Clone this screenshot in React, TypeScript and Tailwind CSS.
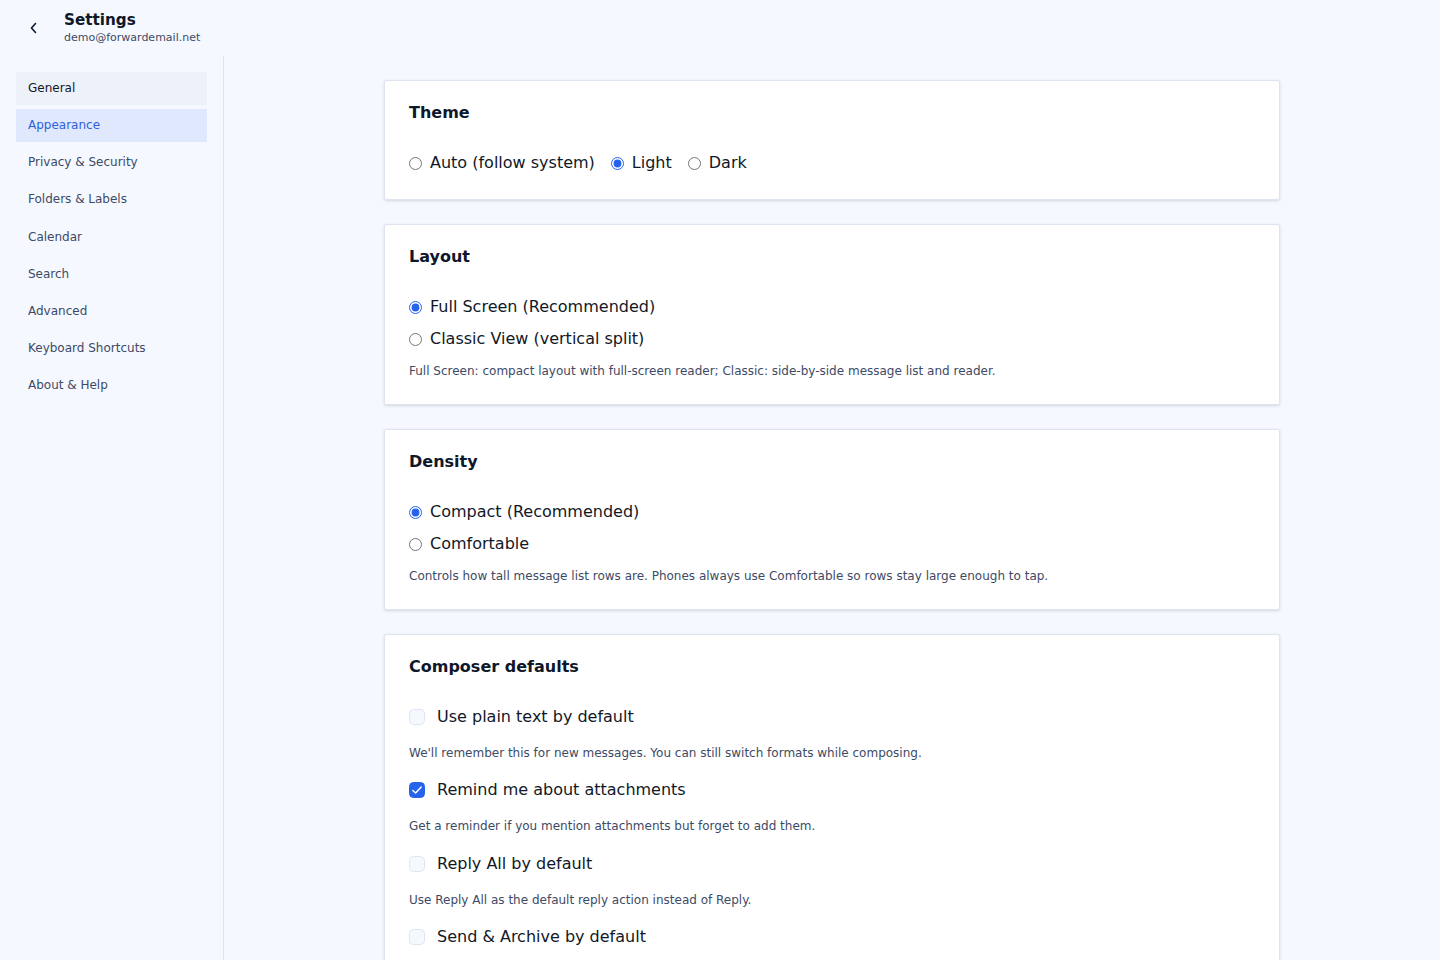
import React from "react";

const nav = ["General", "Appearance", "Privacy & Security", "Folders & Labels", "Calendar", "Search", "Advanced", "Keyboard Shortcuts", "About & Help"];

function Radio({ label, checked }: { label: string; checked?: boolean }) {
  return (
    <label className="flex items-center gap-[8px] h-[24px]">
      <input type="radio" readOnly checked={!!checked} className="m-0 w-[13px] h-[13px] accent-[#2563eb]" />
      <span className="text-[16px] leading-[24px] text-[#111827]">{label}</span>
    </label>
  );
}

function Check({ label, checked }: { label: string; checked?: boolean }) {
  return (
    <label className="flex items-center gap-[12px] h-[24px]">
      <span className={"w-[16px] h-[16px] rounded-[4.5px] border flex items-center justify-center " + (checked ? "bg-[#2563eb] border-[#2563eb]" : "bg-[#f5f8ff] border-[#dfe5f0]")}>
        {checked && (
          <svg width="14" height="14" viewBox="0 0 14 14" fill="none" stroke="white" strokeWidth="1.4" strokeLinecap="round" strokeLinejoin="round" className="shrink-0">
            <path d="M2.8 7.4 L5.6 10 L11.2 4" />
          </svg>
        )}
      </span>
      <span className="text-[16px] leading-[24px] text-[#111827]">{label}</span>
    </label>
  );
}

function Help({ children }: { children: React.ReactNode }) {
  return <p className="text-[12px] leading-[18px] text-[#3d4a66]">{children}</p>;
}

function Card({ title, children }: { title: string; children: React.ReactNode }) {
  return (
    <section className="bg-white border border-[#dfe5ee] rounded-[2px] shadow-[0_1px_3px_rgba(15,23,42,0.14)] px-[24px] pt-[20px] pb-[24px] shrink-0">
      <h2 className="text-[16px] leading-[24px] font-bold text-[#0f172a] mb-[26px]">{title}</h2>
      {children}
    </section>
  );
}

export default function App() {
  return (
    <div className="h-[960px] overflow-hidden bg-[#f5f8ff] antialiased font-['DejaVu_Sans',sans-serif]">
      <header className="h-[56px] flex items-start">
        <div className="w-[64px] h-[56px] flex items-center justify-center">
          <svg width="16" height="16" viewBox="0 0 16 16" fill="none" stroke="#0f172a" strokeWidth="1.6" strokeLinecap="round" strokeLinejoin="round" className="-mr-[4px]">
            <path d="M9.5 3.5 L5.5 8 L9.5 12.5" />
          </svg>
        </div>
        <div className="pt-[10px]">
          <div className="text-[15.2px] leading-[19px] font-bold text-[#0f172a] pt-[1px] -mb-[1px]">Settings</div>
          <div className="text-[11px] leading-[17px] text-[#3d4a66]">demo@forwardemail.net</div>
        </div>
      </header>
      <div className="flex h-[904px]">
        <aside className="w-[224px] shrink-0 border-r border-[#dfe5f0] px-[16px] pt-[16px] flex flex-col gap-[4px]">
          {nav.map((n, i) => (
            <div
              key={n}
              className={"h-[33.125px] px-[12px] pb-[1px] flex items-center text-[12px] " + (i === 0 ? "bg-[#edf1f9] text-[#111827]" : i === 1 ? "bg-[#dfe8fd] text-[#2f5fdc]" : "text-[#3d4a66]")}
            >
              {n}
            </div>
          ))}
        </aside>
        <main className="flex-1 pt-[24px] pl-[160px] pr-[160px] flex flex-col gap-[24px]">
          <Card title="Theme">
            <div className="flex gap-[16px]">
              <Radio label="Auto (follow system)" />
              <Radio label="Light" checked />
              <Radio label="Dark" />
            </div>
          </Card>
          <Card title="Layout">
            <div className="flex flex-col gap-[8px]">
              <Radio label="Full Screen (Recommended)" checked />
              <Radio label="Classic View (vertical split)" />
            </div>
            <div className="mt-[11px]"><Help>Full Screen: compact layout with full-screen reader; Classic: side-by-side message list and reader.</Help></div>
          </Card>
          <Card title="Density">
            <div className="flex flex-col gap-[8px]">
              <Radio label="Compact (Recommended)" checked />
              <Radio label="Comfortable" />
            </div>
            <div className="mt-[11px]"><Help>Controls how tall message list rows are. Phones always use Comfortable so rows stay large enough to tap.</Help></div>
          </Card>
          <Card title="Composer defaults">
            <div className="flex flex-col">
              <Check label="Use plain text by default" />
              <div className="mt-[15px] mb-[16.33px]"><Help>We'll remember this for new messages. You can still switch formats while composing.</Help></div>
              <Check label="Remind me about attachments" checked />
              <div className="mt-[15px] mb-[16.33px]"><Help>Get a reminder if you mention attachments but forget to add them.</Help></div>
              <Check label="Reply All by default" />
              <div className="mt-[15px] mb-[16.33px]"><Help>Use Reply All as the default reply action instead of Reply.</Help></div>
              <Check label="Send & Archive by default" />
            </div>
          </Card>
        </main>
      </div>
    </div>
  );
}
